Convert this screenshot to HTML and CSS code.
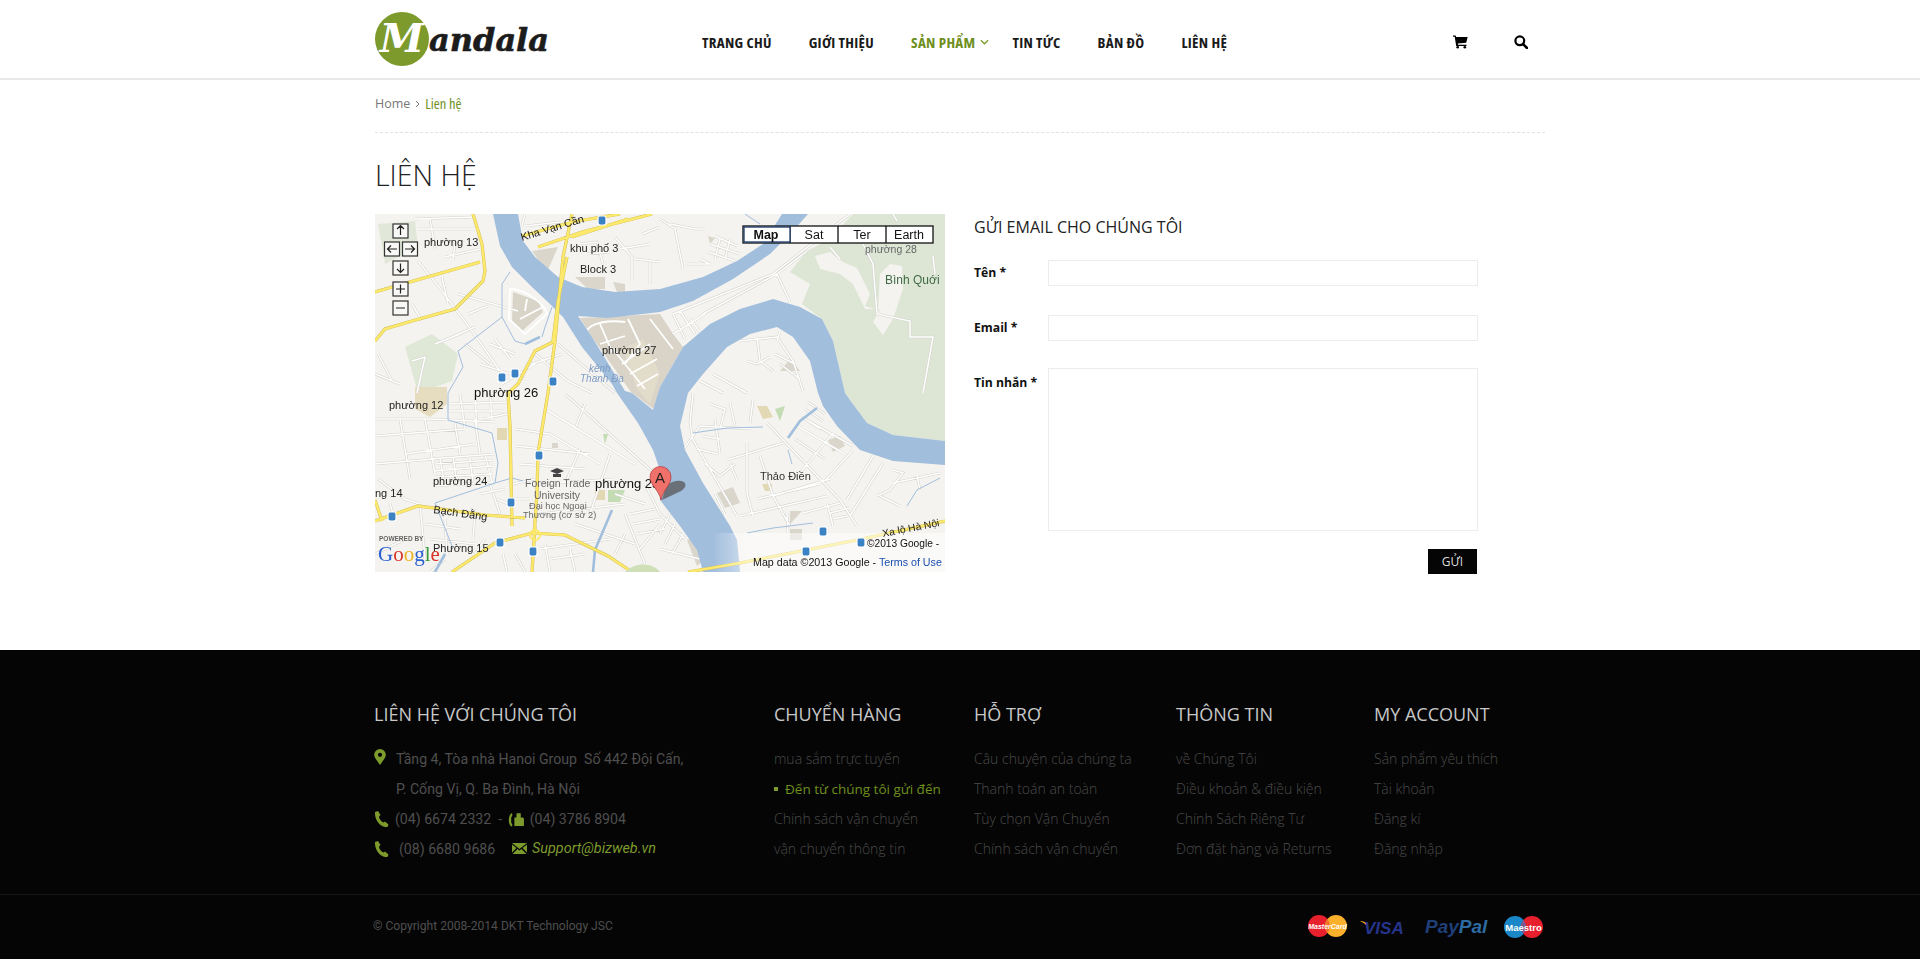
FILE: index.html
```html
<!DOCTYPE html>
<html lang="vi">
<head>
    <meta charset="UTF-8">
    <meta name="viewport" content="width=device-width, initial-scale=1.0">
    <title>Liên hệ - Mandala</title>
    <link rel="stylesheet" href="styles.css">
</head>
<body>
    <header class="site-header">
        <div class="wrap header-row">
            <a class="logo" href="#">
                <span class="logo-badge">M</span>
                <span class="logo-name">andala</span>
            </a>
            <nav class="main-nav">
                <a href="#">TRANG CHỦ</a>
                <a href="#">GIỚI THIỆU</a>
                <a href="#" class="active has-sub">SẢN PHẨM
                    <svg class="chev" viewBox="0 0 10 6"><path d="M1 1l4 4 4-4" fill="none" stroke="#7d9a2c" stroke-width="1.4"/></svg>
                </a>
                <a href="#">TIN TỨC</a>
                <a href="#">BẢN ĐỒ</a>
                <a href="#">LIÊN HỆ</a>
            </nav>
            <div class="header-icons">
                <svg class="cart" viewBox="0 0 16 14"><path d="M0 0h2.800l.5 1.600H15.600l-1.500 6.200-9 .9.3 1.200h9v1.400H3.400L1.800 1.400H0z"/><circle cx="5" cy="12.600" r="1.400"/><circle cx="12.600" cy="12.600" r="1.400"/></svg>
                <svg class="search" viewBox="0 0 14 14"><circle cx="5.800" cy="5.800" r="4.400" fill="none" stroke="#000" stroke-width="2.200"/><path d="M9 9l4 4" stroke="#000" stroke-width="2.600" stroke-linecap="round"/></svg>
            </div>
        </div>
    </header>

    <main class="wrap">
        <div class="breadcrumb">
            <a href="#">Home</a>
            <svg class="crumb-sep" viewBox="0 0 5 8"><path d="M1 1l3 3-3 3" fill="none" stroke="#777" stroke-width="1"/></svg>
            <span>Lien hệ</span>
        </div>
        <h1 class="page-title">LIÊN HỆ</h1>

        <div class="contact-row">
            <svg class="map" viewBox="0 0 570 358">
                <defs>
                    <path id="streets" d="M43 47L67 77 97 117 127 160M83 80L143 97M93 100L113 92M37 90L47 107M67 63L73 90M40 5L98 3M43 15L100 15M55 5L60 35M70 43L105 35M80 30L78 45M77 123L100 113M90 130L115 150M115 130L140 140M120 125L135 145M105 150L150 165M37 147L50 143 42 179M3 140L17 167M160 140L193 167 217 179M183 130L240 179M157 150L187 140M127 170L160 150M150 0L147 12M240 23L257 43 257 67M267 20L285 13M260 45L285 48M275 48L275 70M245 35L275 30M150 12L185 8M205 30L222 28 228 50M212 40L235 38M285 5L300 15 308 55M310 50L335 50 325 45M295 10L320 15 330 15M335 30L365 40M340 22L362 32M333 38L360 47M345 25L340 45M355 25L350 45M298 100L398 60 475 0M328 100L402 60 432 37M402 60L415 88M298 100L310 125M305 97L320 120M315 105L325 118M298 120L330 100M455 33L465 45M488 30L498 50 502 100 535 107 535 123 558 123 548 179M558 42L560 60M518 0L522 7M365 127L402 123 418 147 428 177M382 123L385 147 398 157M405 117L402 127M338 160L372 179M325 167L348 179M372 147L382 150 395 143M400 140L420 150M405 150L425 165M308 236L325 212 378 215M318 179L315 209 318 226 362 302M327 222L345 225M322 235L342 240M340 205L345 240M392 209L465 286 482 312M355 189L360 212M378 186L375 209M352 246L408 229M372 229L372 279 378 302M355 249L362 266M385 242L398 282 415 312M365 302L452 282M382 285L445 270M398 282L455 265M428 299L465 289M452 289L458 312M412 299L413 320M455 299L475 294M458 305L472 302M422 212L470 240M430 205L478 232M420 225L450 245M458 219L425 259M478 236L448 269M498 242L472 286M508 249L485 286 475 302M518 256L528 259 515 276 502 282M505 282L525 292M518 269L565 259M542 262L545 276M430 195L448 207M427 203L445 215M433 188L450 200M335 190L350 195 345 215M330 250L345 262 360 250M340 280L350 300M285 300L310 325M295 300L285 320M300 310L290 330M308 320L297 340M285 335L325 345M0 205L55 205 120 208M0 222L90 215M30 240L100 230M0 250L60 245M50 205L60 260M25 205L35 265M80 210L85 240M100 205L105 240M55 245L120 240M60 250L118 246M60 257L118 252M60 263L118 260M60 272L118 268M65 245L70 272M78 243L82 270M95 245L98 268M110 240L118 272M75 190L132 188M85 180L90 215M100 180L102 215M115 180L117 205M75 197L130 197M132 200L108 205M3 265L30 285 45 290M45 290L50 345M15 290L20 305M50 310L85 315M55 325L100 330M70 305L72 340M100 300L98 325M115 270L125 300M122 285L133 290M105 280L130 275M138 270L160 265M138 285L155 285M140 215L175 220 225 250M140 232L215 240M145 250L210 255M165 270L240 265M205 235L190 270M235 240L215 300M170 195L260 250M190 180L280 260M210 190L200 215M165 300L250 290M240 280L270 290M200 310L260 330M165 335L235 325M250 300L270 350M270 270L285 300M175 345L210 340M240 340L250 320M285 310L265 335M255 300L280 295M258 310L285 305M262 320L290 315M0 340L30 325M70 345L55 358M170 330L175 358M128 340L132 358M100 340L110 325M140 340L150 358M195 335L200 358M60 130L85 120M0 160L25 170"/>
                    <path id="yellow" d="M98 0L107 30 110 57 108 67 80 95 37 107 10 115 0 127M0 78L105 48M163 33L207 18 277 0M197 23L253 5M147 22L197 8 245 0M197 0L188 43 180 127 173 179 163 239 162 279 159 322M192 43L183 87 178 127M180 127L160 137 143 170 133 179 135 212 137 312M0 307L43 292 110 301 150 304M77 358L120 329 157 319 190 321 233 342 257 358M313 358L365 349 482 326 570 307M0 286L7 307M160 312L157 358"/>
                    <linearGradient id="fade" x1="0" x2="1" y1="0" y2="0">
                        <stop offset="0" stop-color="#fff" stop-opacity="0"/>
                        <stop offset=".15" stop-color="#fff" stop-opacity=".5"/>
                        <stop offset="1" stop-color="#fff" stop-opacity=".55"/>
                    </linearGradient>
                </defs>

                <rect width="570" height="358" fill="#f4f3ef"/>

                <!-- parks -->
                <path d="M3 10L40 7 43 33 10 50z" fill="#e1e8d9"/>
                <path d="M30 133L57 120 83 140 77 167 43 179z" fill="#dfe8d6"/>
                <path d="M478 0L455 25 432 37 415 58 435 70 427 90 447 105 458 127 470 179 492 209 518 221 570 227V0z" fill="#dde6d5"/>
                <path d="M440 42L455 38 468 48 482 54 495 80 490 92 503 96 505 60 515 50 527 52 528 75 518 105 508 121 498 108 505 95 490 95 478 70 465 60 445 55z" fill="#f4f3ef"/>

                <!-- sand and built up blocks -->
                <path d="M40 173L72 173 72 190 55 203 40 195z" fill="#e6dcc0"/>
                <path d="M122 214H132V226H122zM220 276H230V286H220zM382 192L392 192 398 203 388 205zM387 270H397V277H390z" fill="#e3d8b4"/>
                <path d="M157 37L183 33 172 58zM200 63H230V75H213zM238 68L250 70 250 78 242 78zM333 22L340 24 335 30zM342 279L358 273 365 289 350 294zM415 297H427L415 310zM453 226L465 222 470 232 458 238zM312 326L322 322 330 345 322 352zM415 315H427V326H415zM415 145L425 157H405zM177 229H183V234H177z" fill="#dad6cb"/>
                <path d="M233 276H250L245 288H233zM228 220L233 220 230 230zM400 195L410 192 405 207z" fill="#c4dcb4"/>

                <!-- peninsula -->
                <path d="M205 104L285 100 298 120 308 133 285 173 280 196 256 178 217 123z" fill="#d9d4c7"/>
                <path d="M248 135L268 125 285 160 275 190 262 175z" fill="#e2dccb"/>
                <path d="M138 78L163 87 168 98 147 117 137 107z" fill="#d9d4c8"/>

                <!-- streets -->
                <use href="#streets" class="street-case"/>
                <use href="#streets" class="street"/>
                <path class="block-lines" d="M211 118C215 108 235 106 250 108M225 110L238 140M253 105L265 130 250 150M247 150L275 130M238 135L270 175M275 105L298 135M225 130L250 122M255 160L282 145M262 172L283 160M135 75C150 75 170 90 172 100L150 120 134 105zM145 105L168 93M152 85L150 97"/>

                <!-- river -->
                <path d="M118 0L125 32 137 53 157 73 175 90 188 103 207 133 237 170 242 179 263 209 278 236 285 256 285 286 305 312 322 336 328 358H365L362 326 355 312 328 269 310 236 305 212 313 179 328 160 352 133 375 120 402 113 418 123 435 147 443 179 448 192 462 212 485 236 518 247 570 251V227L518 221 492 209 475 186 470 179 458 127 447 105 425 93 398 85 365 95 335 110 308 133 285 173 278 196 257 179 250 177 217 123 203 102 233 104 285 98 318 87 358 65 395 40 418 17 433 0H407L388 30 362 47 328 63 285 75 240 78 207 73 183 63 160 43 148 27 143 0z" fill="#a2bedd"/>
                <path class="canal" d="M135 58L127 70 127 103 83 137 88 153 73 179 73 206 117 219 123 249 120 269 60 289 77 332M127 103L140 127 150 130 165 123M177 93L170 113 167 123M120 269L137 264 148 267M413 236L417 250M318 219L352 214 388 213M372 319L398 314 438 309M532 292L542 276 565 264M370 0L385 10"/>
                <path class="canal canal-wide" d="M442 194L425 207 413 224M237 296L220 336 218 358M70 340L60 358M150 130L165 123"/>

                <!-- main roads -->
                <use href="#yellow" class="road-case"/>
                <use href="#yellow" class="road"/>
                <circle cx="160" cy="321" r="5" fill="none" stroke="#fce86a" stroke-width="2"/>
                <path d="M285 358C280 350 262 346 250 358z" fill="#cfe0b8"/>

                <!-- washed out corner under the copyright -->
                <rect x="338" y="319" width="232" height="39" fill="url(#fade)"/>

                <!-- bus stops -->
                <g class="bus">
                    <rect x="223" y="2" width="8" height="9" rx="2"/>
                    <rect x="123" y="159" width="8" height="9" rx="2"/>
                    <rect x="136" y="155" width="8" height="9" rx="2"/>
                    <rect x="174" y="163" width="8" height="9" rx="2"/>
                    <rect x="160" y="237" width="8" height="9" rx="2"/>
                    <rect x="132" y="284" width="8" height="9" rx="2"/>
                    <rect x="13" y="298" width="8" height="9" rx="2"/>
                    <rect x="121" y="324" width="8" height="9" rx="2"/>
                    <rect x="154" y="333" width="8" height="9" rx="2"/>
                    <rect x="444" y="313" width="8" height="9" rx="2"/>
                    <rect x="482" y="324" width="8" height="9" rx="2"/>
                    <rect x="427" y="333" width="8" height="9" rx="2"/>
                </g>

                <g class="map-labels">
                    <text x="49" y="32">phường 13</text>
                    <text x="147" y="27" transform="rotate(-17 147 27)">Kha Vạn Cần</text>
                    <text x="195" y="38">khu phố 3</text>
                    <text x="205" y="59">Block 3</text>
                    <text x="490" y="39" class="soft">phường 28</text>
                    <text x="510" y="70" class="park">Bình Quới</text>
                    <text x="227" y="140">phường 27</text>
                    <text x="214" y="158" class="water">kênh</text>
                    <text x="205" y="168" class="water">Thanh Đa</text>
                    <text x="99" y="183" class="big">phường 26</text>
                    <text x="14" y="195">phường 12</text>
                    <text x="58" y="271">phường 24</text>
                    <text x="0" y="283">ng 14</text>
                    <text x="150" y="273" class="soft">Foreign Trade</text>
                    <text x="159" y="285" class="soft">University</text>
                    <text x="154" y="295" class="tiny">Đại học Ngoại</text>
                    <text x="148" y="304" class="tiny">Thương (cơ sở 2)</text>
                    <text x="220" y="274" class="big">phường 23</text>
                    <text x="385" y="266" class="place">Thảo Điền</text>
                    <text x="58" y="299" transform="rotate(8 58 299)" class="road-name">Bạch Đằng</text>
                    <text x="58" y="338">Phường 15</text>
                    <text x="508" y="323" transform="rotate(-11 508 323)" class="xalo">Xa lộ Hà Nội</text>
                    <text x="492" y="333" class="copy">©2013 Google -</text>
                    <text x="378" y="352" class="copy-low">Map data ©2013 Google - <tspan fill="#1a4fb0">Terms of Use</tspan></text>
                    <text x="4" y="327" class="powered">POWERED BY</text>
                    <text x="3" y="347" class="google"><tspan fill="#2a5fd0">G</tspan><tspan fill="#d8342a">o</tspan><tspan fill="#e8b51e">o</tspan><tspan fill="#2a5fd0">g</tspan><tspan fill="#3a9a3a">l</tspan><tspan fill="#d8342a">e</tspan></text>
                </g>

                <!-- university icon -->
                <path d="M175 257l7-3 7 3-7 3zM178 260h8v3h-8z" fill="#444"/>

                <!-- marker -->
                <path d="M287 286L306 277C312 273 312 268 306 267 298 266 292 270 290 276z" fill="#555" opacity=".75"/>
                <path d="M286 286C284 276 275 271 275 263a10.500 10.500 0 0 1 21 0C296 271 288 276 286 286z" fill="#f0716a" stroke="#a33" stroke-width=".7"/>
                <text x="280" y="269" class="marker-letter">A</text>

                <!-- map controls -->
                <g class="map-ctrl">
                    <rect x="18" y="10" width="15" height="14"/>
                    <rect x="9.500" y="28" width="15" height="14"/>
                    <rect x="27.500" y="28" width="15" height="14"/>
                    <rect x="18" y="47" width="15" height="14"/>
                    <rect x="18" y="68" width="15" height="14"/>
                    <rect x="18" y="87" width="15" height="14"/>
                    <path d="M25.500 21v-9M22 15l3.500-3.500L29 15M13 35h9M16 31.500L12.500 35l3.500 3.500M39 35h-9M36 31.500l3.500 3.500-3.500 3.500M25.500 49.500v9M22 55l3.500 3.500L29 55M21 75h9M25.500 70.500v9M21 94h9"/>
                </g>
                <g class="map-types">
                    <rect x="368" y="12" width="190" height="17" fill="#fff"/>
                    <path d="M415 12v17M463 12v17M511 12v17"/>
                    <rect x="369" y="13" width="46" height="15" class="current"/>
                    <text x="391" y="25" class="on">Map</text>
                    <text x="439" y="25">Sat</text>
                    <text x="487" y="25">Ter</text>
                    <text x="534" y="25">Earth</text>
                </g>
            </svg>

            <form class="contact-form">
                <h2>GỬI EMAIL CHO CHÚNG TÔI</h2>
                <div class="field">
                    <label for="name">Tên *</label>
                    <input id="name" type="text">
                </div>
                <div class="field">
                    <label for="email">Email *</label>
                    <input id="email" type="text">
                </div>
                <div class="field field-msg">
                    <label for="msg">Tin nhắn *</label>
                    <textarea id="msg"></textarea>
                </div>
                <div class="form-actions">
                    <button type="button">GỬI</button>
                </div>
            </form>
        </div>
    </main>

    <footer class="site-footer">
        <div class="wrap footer-cols">
            <div class="col-contact">
                <h3>LIÊN HỆ VỚI CHÚNG TÔI</h3>
                <p class="addr">
                    <svg class="pin" viewBox="0 0 11 15"><path fill-rule="evenodd" d="M5.500 0a5.500 5.500 0 0 1 5.500 5.500c0 3-3.500 6.500-5.500 9.500C3.500 12 0 8.500 0 5.500A5.500 5.500 0 0 1 5.500 0zm0 3.500a2 2 0 1 0 0 4 2 2 0 0 0 0-4z"/></svg>
                    <span>Tầng 4, Tòa nhà Hanoi Group&nbsp; Số 442 Đội Cấn,<br>P. Cống Vị, Q. Ba Đình, Hà Nội</span>
                </p>
                <p>
                    <svg class="phone" viewBox="0 0 15 16"><path d="M1 1l3-1 2.500 4-1.500 1.500c0 2 2 5 4.500 6l1.500-1 3.500 3-1 2.500c-6 1-13-6-12.500-15z"/></svg>
                    <span>(04) 6674 2332&nbsp; -&nbsp;</span>
                    <svg class="fax" viewBox="0 0 16 14"><path d="M3 1l1 .5v2L3 5v5l1 1.500V13l-1 .5C0 11 0 4 3 1zM6 5h2V1h4v4h2l1 1v7H6z"/></svg>
                    <span>(04) 3786 8904</span>
                </p>
                <p>
                    <svg class="phone" viewBox="0 0 15 16"><path d="M1 1l3-1 2.500 4-1.500 1.500c0 2 2 5 4.500 6l1.500-1 3.500 3-1 2.500c-6 1-13-6-12.500-15z"/></svg>
                    <span class="num2">(08) 6680 9686</span>
                    <svg class="mail" viewBox="0 0 15 11"><path d="M0 0h15L7.500 6zM0 1.500l4.500 3.600L0 9.500zM15 1.500v8l-4.500-4.400zM5.500 6l2 1.500 2-1.500 5 5H.5z"/></svg>
                    <a class="support" href="#">Support@bizweb.vn</a>
                </p>
            </div>
            <div class="col-links">
                <h3>CHUYỂN HÀNG</h3>
                <a href="#">mua sắm trực tuyến</a>
                <a href="#" class="current">Đến từ chúng tôi gửi đến</a>
                <a href="#">Chính sách vận chuyển</a>
                <a href="#">vận chuyển thông tin</a>
            </div>
            <div class="col-links">
                <h3>HỖ TRỢ</h3>
                <a href="#">Câu chuyện của chúng ta</a>
                <a href="#">Thanh toán an toàn</a>
                <a href="#">Tùy chọn Vận Chuyển</a>
                <a href="#">Chính sách vận chuyển</a>
            </div>
            <div class="col-links">
                <h3>THÔNG TIN</h3>
                <a href="#">về Chúng Tôi</a>
                <a href="#">Điều khoản &amp; điều kiện</a>
                <a href="#">Chính Sách Riêng Tư</a>
                <a href="#">Đơn đặt hàng và Returns</a>
            </div>
            <div class="col-links">
                <h3>MY ACCOUNT</h3>
                <a href="#">Sản phẩm yêu thích</a>
                <a href="#">Tài khoản</a>
                <a href="#">Đăng kí</a>
                <a href="#">Đăng nhập</a>
            </div>
        </div>
        <div class="footer-bottom">
            <div class="wrap footer-bottom-row">
                <span class="copyright">© Copyright 2008-2014 DKT Technology JSC</span>
                <svg class="payments" viewBox="0 0 240 24">
                    <circle cx="11" cy="11" r="11" fill="#e8202e"/>
                    <circle cx="28" cy="11" r="11" fill="#fbb02c"/>
                    <path d="M19.500 4a11 11 0 0 1 0 14 11 11 0 0 1 0-14z" fill="#f0742a"/>
                    <text x="19.500" y="13.500" class="pay-mc">MasterCard</text>
                    <path d="M52 6c5 0 7 2 9 7-2-3-5-5-9-7z" fill="#f2a81e"/>
                    <text x="56" y="19" class="pay-visa">VISA</text>
                    <text x="117" y="18" class="pay-pp">Pay<tspan fill="#2c6ba3">Pal</tspan></text>
                    <circle cx="207" cy="12" r="11" fill="#1a87c9"/>
                    <circle cx="224" cy="12" r="11" fill="#e8202e"/>
                    <path d="M215.500 5a11 11 0 0 1 0 14 11 11 0 0 1 0-14z" fill="#7a5a94"/>
                    <text x="215.500" y="15.500" class="pay-ma">Maestro</text>
                </svg>
            </div>
        </div>
    </footer>
</body>
</html>
```

FILE: styles.css
```css
* {
    box-sizing: border-box;
}
body {
    margin: 0;
    font-family: "Open Sans", Arial, sans-serif;
    font-size: 13px;
    color: #222;
    background-color: #fff;
}
a {
    text-decoration: none;
    color: inherit;
}
.wrap {
    width: 1170px;
    margin: 0 auto;
}

/* header */
.site-header {
    height: 80px;
    border-bottom: 2px solid #e8e8e8;
}
.header-row {
    display: flex;
    align-items: center;
    height: 78px;
}
.logo {
    width: 327px;
    display: flex;
    align-items: center;
    height: 54px;
}
.logo-badge {
    width: 54px;
    height: 54px;
    border-radius: 50%;
    background-color: #7d9a2c;
    color: #fff;
    font-family: "DejaVu Serif", serif;
    font-weight: bold;
    font-style: italic;
    font-size: 40px;
    line-height: 52px;
    text-align: center;
    flex: none;
}
.logo-name {
    font-family: "DejaVu Serif", serif;
    font-weight: bold;
    font-style: italic;
    font-size: 32px;
    color: #1c1c1c;
    -webkit-text-stroke: .6px #1c1c1c;
    margin-top: 2px;
}
.main-nav {
    display: flex;
    gap: 37px;
    padding-top: 5px;
    font-size: 15px;
    font-weight: 700;
    font-stretch: 75%;
    letter-spacing: .3px;
    color: #1a1a1a;
}
.main-nav .active {
    color: #6f8f1e;
}
.has-sub {
    position: relative;
}
.chev {
    position: absolute;
    right: -14px;
    top: 7px;
    width: 9px;
    height: 6px;
}
.header-icons {
    margin-left: auto;
    display: flex;
    gap: 46px;
    padding: 5px 17px 0 0;
    align-items: center;
}
.cart {
    width: 15px;
    height: 14px;
}
.search {
    width: 14px;
    height: 14px;
}

/* breadcrumb and title */
.breadcrumb {
    height: 53px;
    padding-top: 14px;
    border-bottom: 1px dashed #e2e2e2;
    display: flex;
    align-items: flex-start;
    gap: 5px;
    font-size: 12.500px;
    line-height: 20px;
    color: #777;
}
.breadcrumb span {
    color: #6f8f1e;
    font-size: 14.500px;
    font-stretch: 75%;
}
.crumb-sep {
    width: 5px;
    height: 8px;
    margin-top: 6px;
}
.page-title {
    margin: 0;
    padding-top: 21px;
    height: 81px;
    font-size: 28.500px;
    font-weight: 300;
    line-height: 42px;
    color: #222;
}

/* map and form */
.contact-row {
    display: flex;
    gap: 29px;
    height: 436px;
}
.map {
    width: 570px;
    height: 358px;
    flex: none;
    display: block;
    filter: blur(.3px);
}
.street-case {
    fill: none;
    stroke: #d3d2cc;
    stroke-width: 2.600;
}
.street {
    fill: none;
    stroke: #fff;
    stroke-width: 1.500;
}
.block-lines {
    fill: none;
    stroke: #fff;
    stroke-width: 1.800;
}
.canal {
    fill: none;
    stroke: #a2bedd;
    stroke-width: 1;
}
.canal-wide {
    stroke-width: 2.600;
}
.road-case {
    fill: none;
    stroke: #cdbb57;
    stroke-width: 3.200;
}
.road {
    fill: none;
    stroke: #fce86a;
    stroke-width: 2.400;
}
.bus rect {
    fill: #3b82c4;
    stroke: #fff;
    stroke-width: 1.200;
}
.map-labels text {
    font-family: "Liberation Sans", Arial, sans-serif;
    font-size: 11px;
    fill: #222;
}
.map-labels .big {
    font-size: 13px;
    fill: #111;
}
.map-labels .soft {
    fill: #666;
    font-size: 10.500px;
}
.map-labels .tiny {
    fill: #666;
    font-size: 9.200px;
}
.map-labels .park {
    fill: #3f6a45;
    font-size: 12px;
}
.map-labels .place {
    fill: #333;
    font-size: 11px;
}
.map-labels .water {
    fill: #7e9cc4;
    font-size: 10px;
    font-style: italic;
}
.map-labels .road-name {
    font-size: 11px;
    fill: #222;
}
.map-labels .xalo {
    font-size: 10.300px;
}
.map-labels .copy {
    font-size: 10.200px;
    fill: #111;
}
.map-labels .copy-low {
    font-size: 10.700px;
    fill: #111;
}
.map-labels .powered {
    font-size: 6.500px;
    font-weight: bold;
    fill: #666;
}
.map-labels .google {
    font-size: 21px;
    font-family: "Liberation Serif", serif;
}
.marker-letter {
    font-family: "Liberation Sans", Arial, sans-serif;
    font-size: 15px;
    fill: #222;
}
.map-ctrl rect {
    fill: #f8f8f6;
    stroke: #333;
    stroke-width: 1.200;
}
.map-ctrl path {
    fill: none;
    stroke: #222;
    stroke-width: 1.200;
}
.map-types rect,
.map-types path {
    stroke: #111;
    stroke-width: 1.300;
}
.map-types .current {
    fill: #fff;
    stroke: #1d3a66;
    stroke-width: 1.300;
}
.map-types text {
    font-family: "Liberation Sans", Arial, sans-serif;
    font-size: 12.500px;
    fill: #111;
    text-anchor: middle;
}
.map-types .on {
    font-weight: bold;
}
.contact-form {
    width: 504px;
}
.contact-form h2 {
    margin: 0 0 19px;
    font-size: 16px;
    font-weight: 400;
    line-height: 27px;
    color: #222;
}
.field {
    display: flex;
    margin-bottom: 29px;
}
.field label {
    width: 74px;
    font-size: 12.200px;
    font-weight: 700;
    line-height: 26px;
    color: #111;
    flex: none;
}
.field input,
.field textarea {
    width: 430px;
    height: 26px;
    border: 1px solid #ececec;
    background-color: #fff;
    display: block;
    padding: 0;
}
.field-msg {
    margin-bottom: 18px;
    margin-top: -2px;
}
.field-msg label {
    padding-top: 2px;
}
.field-msg textarea {
    height: 163px;
    resize: none;
}
.form-actions {
    width: 503px;
    display: flex;
    justify-content: flex-end;
}
.form-actions button {
    width: 49px;
    height: 25px;
    border: 0;
    background-color: #050505;
    color: #ddd;
    font-family: inherit;
    font-size: 12px;
    padding: 0;
}

/* footer */
.site-footer {
    height: 309px;
    background-color: #050505;
    color: #555;
    overflow: hidden;
}
.footer-cols {
    display: grid;
    grid-template-columns: 400px 200px 202px 198px 1fr;
    height: 244px;
    padding-top: 48px;
    margin-left: 374px;
}
.footer-cols h3 {
    margin: 0 0 14px;
    font-size: 18px;
    font-weight: 400;
    line-height: 32px;
    color: #c8c8c8;
}
.col-contact p {
    margin: 0;
    display: flex;
    align-items: flex-start;
    font-family: Roboto, Arial, sans-serif;
    font-size: 14.150px;
    line-height: 30px;
    color: #4f4f4f;
}
.col-contact svg {
    fill: #7d9a2c;
    flex: none;
}
.pin {
    width: 12px;
    height: 16px;
    margin: 5px 10px 0 0;
}
.phone {
    width: 15px;
    height: 16px;
    margin: 7px 6px 0 0;
}
.fax {
    width: 17px;
    height: 15px;
    margin: 8px 5px 0 2px;
}
.num2 {
    margin-left: 4px;
    width: 113px;
}
.mail {
    width: 15px;
    height: 11px;
    margin: 9px 5px 0 0;
}
.support {
    color: #7d9a2c;
    font-style: italic;
    font-size: 14.400px;
}
.col-links a {
    display: block;
    font-size: 14px;
    font-weight: 300;
    line-height: 30px;
    color: #4a4a4a;
    white-space: nowrap;
}
.col-links .current {
    color: #6f8f1e;
    font-weight: 400;
    font-size: 13.500px;
    padding-left: 11px;
    position: relative;
}
.col-links .current::before {
    content: "";
    position: absolute;
    left: 0;
    top: 13px;
    width: 4px;
    height: 4px;
    background-color: #7d9a2c;
}
.footer-bottom {
    border-top: 1px solid #161616;
    height: 65px;
}
.footer-bottom-row {
    display: flex;
    justify-content: space-between;
    align-items: flex-start;
}
.copyright {
    font-family: Roboto, Arial, sans-serif;
    font-size: 12.100px;
    color: #4f4f4f;
    line-height: 18px;
    margin: 22px 0 0 -2px;
}
.payments {
    width: 240px;
    height: 24px;
    margin: 20px -3px 0 0;
}
.pay-mc {
    font-family: "Liberation Sans", Arial, sans-serif;
    font-size: 7px;
    font-weight: bold;
    font-style: italic;
    fill: #fff;
    text-anchor: middle;
}
.pay-visa {
    font-family: "Liberation Sans", Arial, sans-serif;
    font-size: 17px;
    font-weight: bold;
    font-style: italic;
    fill: #27348b;
    -webkit-text-stroke: .4px #27348b;
}
.pay-pp {
    font-family: "Liberation Sans", Arial, sans-serif;
    font-size: 19px;
    font-weight: bold;
    font-style: italic;
    fill: #1f3f78;
}
.pay-ma {
    font-family: "Liberation Sans", Arial, sans-serif;
    font-size: 9.500px;
    font-weight: bold;
    fill: #fff;
    text-anchor: middle;
}
```
